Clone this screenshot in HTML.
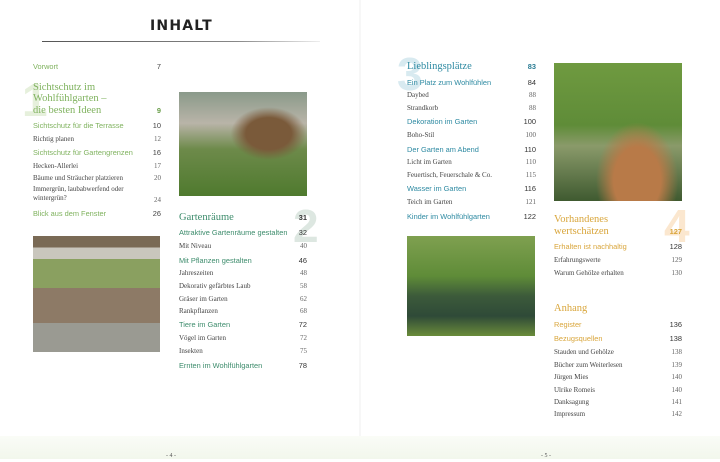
<!DOCTYPE html>
<html><head><meta charset="utf-8"><style>
*{margin:0;padding:0;box-sizing:border-box}
body{width:720px;height:459px;position:relative;overflow:hidden;background:#fff;font-family:"Liberation Serif",serif}
.bg{position:absolute;left:0;top:436px;width:720px;height:23px;background:linear-gradient(#fafcf7,#f2f7ec)}
.r{position:absolute;height:12px;line-height:12px;white-space:nowrap}
.r span{position:absolute;right:0;top:0}
.s{font-family:"Liberation Sans",sans-serif;font-size:7.4px}
.p{font-size:7px;color:#444}
.p span{color:#666}
.h{font-size:10.5px}
.n{position:absolute;font-family:"Liberation Sans",sans-serif;font-weight:bold;font-size:46px;line-height:46px}
.ph{position:absolute}
</style></head><body>
<div class="bg"></div>
<div style="position:absolute;left:359px;top:0;width:2px;height:436px;background:#f7f7f7"></div>
<div style="position:absolute;left:150px;top:18px;font-family:'DejaVu Sans',sans-serif;font-weight:bold;font-size:14px;letter-spacing:1.2px;color:#222">INHALT</div>
<div style="position:absolute;left:42px;top:41px;width:278px;height:1px;background:linear-gradient(90deg,#555,#888 70%,#eee)"></div>

<div class="n" style="left:22px;top:77px;color:#e6f0dc">1</div>
<div class="n" style="left:293px;top:203px;color:#dde7e1">2</div>
<div class="n" style="left:397px;top:51px;color:#d8eaf0">3</div>
<div class="n" style="left:664px;top:203px;color:#fbe7cf">4</div>

<div style="color:#7fb25e">
<div class="r s" style="left:33px;top:61px;width:128px">Vorwort<span style="color:#444">7</span></div>
<div class="r h" style="left:33px;top:82px;width:128px">Sichtschutz im</div>
<div class="r h" style="left:33px;top:93px;width:128px">Wohlfühlgarten –</div>
<div class="r h" style="left:33px;top:105px;width:128px">die besten Ideen<span class="s" style="font-weight:bold;color:#6a9e4a">9</span></div>
<div class="r s" style="left:33px;top:120px;width:128px">Sichtschutz für die Terrasse<span style="color:#444">10</span></div>
<div class="r p" style="left:33px;top:133px;width:128px">Richtig planen<span>12</span></div>
<div class="r s" style="left:33px;top:147px;width:128px">Sichtschutz für Gartengrenzen<span style="color:#444">16</span></div>
<div class="r p" style="left:33px;top:160px;width:128px">Hecken-Allerlei<span>17</span></div>
<div class="r p" style="left:33px;top:172px;width:128px">Bäume und Sträucher platzieren<span>20</span></div>
<div class="r p" style="left:33px;top:185px;width:128px;line-height:9px">Immergrün, laubabwerfend oder<br>wintergrün?</div>
<div class="r p" style="left:33px;top:194px;width:128px"><span>24</span></div>
<div class="r s" style="left:33px;top:208px;width:128px">Blick aus dem Fenster<span style="color:#444">26</span></div>
</div>

<div style="color:#3d8c6c">
<div class="r h" style="left:179px;top:212px;width:128px">Gartenräume<span class="s" style="font-weight:bold;color:#333">31</span></div>
<div class="r s" style="left:179px;top:227px;width:128px">Attraktive Gartenräume gestalten<span style="color:#333">32</span></div>
<div class="r p" style="left:179px;top:240px;width:128px">Mit Niveau<span>40</span></div>
<div class="r s" style="left:179px;top:255px;width:128px">Mit Pflanzen gestalten<span style="color:#333">46</span></div>
<div class="r p" style="left:179px;top:267px;width:128px">Jahreszeiten<span>48</span></div>
<div class="r p" style="left:179px;top:280px;width:128px">Dekorativ gefärbtes Laub<span>58</span></div>
<div class="r p" style="left:179px;top:293px;width:128px">Gräser im Garten<span>62</span></div>
<div class="r p" style="left:179px;top:305px;width:128px">Rankpflanzen<span>68</span></div>
<div class="r s" style="left:179px;top:319px;width:128px">Tiere im Garten<span style="color:#333">72</span></div>
<div class="r p" style="left:179px;top:332px;width:128px">Vögel im Garten<span>72</span></div>
<div class="r p" style="left:179px;top:345px;width:128px">Insekten<span>75</span></div>
<div class="r s" style="left:179px;top:360px;width:128px">Ernten im Wohlfühlgarten<span style="color:#333">78</span></div>
</div>

<div style="color:#2e8aa2">
<div class="r h" style="left:407px;top:61px;width:129px">Lieblingsplätze<span class="s" style="font-weight:bold;color:#2a7c94">83</span></div>
<div class="r s" style="left:407px;top:77px;width:129px">Ein Platz zum Wohlfühlen<span style="color:#333">84</span></div>
<div class="r p" style="left:407px;top:89px;width:129px">Daybed<span>88</span></div>
<div class="r p" style="left:407px;top:102px;width:129px">Strandkorb<span>88</span></div>
<div class="r s" style="left:407px;top:116px;width:129px">Dekoration im Garten<span style="color:#333">100</span></div>
<div class="r p" style="left:407px;top:129px;width:129px">Boho-Stil<span>100</span></div>
<div class="r s" style="left:407px;top:144px;width:129px">Der Garten am Abend<span style="color:#333">110</span></div>
<div class="r p" style="left:407px;top:156px;width:129px">Licht im Garten<span>110</span></div>
<div class="r p" style="left:407px;top:169px;width:129px">Feuertisch, Feuerschale &amp; Co.<span>115</span></div>
<div class="r s" style="left:407px;top:183px;width:129px">Wasser im Garten<span style="color:#333">116</span></div>
<div class="r p" style="left:407px;top:196px;width:129px">Teich im Garten<span>121</span></div>
<div class="r s" style="left:407px;top:211px;width:129px">Kinder im Wohlfühlgarten<span style="color:#333">122</span></div>
</div>

<div style="color:#d9a63c">
<div class="r h" style="left:554px;top:214px;width:128px">Vorhandenes</div>
<div class="r h" style="left:554px;top:226px;width:128px">wertschätzen<span class="s" style="font-weight:bold;color:#d9a63c">127</span></div>
<div class="r s" style="left:554px;top:241px;width:128px">Erhalten ist nachhaltig<span style="color:#333">128</span></div>
<div class="r p" style="left:554px;top:254px;width:128px">Erfahrungswerte<span>129</span></div>
<div class="r p" style="left:554px;top:267px;width:128px">Warum Gehölze erhalten<span>130</span></div>
<div class="r h" style="left:554px;top:303px;width:128px">Anhang</div>
<div class="r s" style="left:554px;top:319px;width:128px">Register<span style="color:#333">136</span></div>
<div class="r s" style="left:554px;top:333px;width:128px">Bezugsquellen<span style="color:#333">138</span></div>
<div class="r p" style="left:554px;top:346px;width:128px">Stauden und Gehölze<span>138</span></div>
<div class="r p" style="left:554px;top:359px;width:128px">Bücher zum Weiterlesen<span>139</span></div>
<div class="r p" style="left:554px;top:371px;width:128px">Jürgen Mies<span>140</span></div>
<div class="r p" style="left:554px;top:384px;width:128px">Ulrike Romeis<span>140</span></div>
<div class="r p" style="left:554px;top:396px;width:128px">Danksagung<span>141</span></div>
<div class="r p" style="left:554px;top:408px;width:128px">Impressum<span>142</span></div>
</div>

<div class="r p" style="left:166px;top:450px;font-size:6px;color:#555">- 4 -</div>
<div class="r p" style="left:541px;top:450px;font-size:6px;color:#555">- 5 -</div>

<div class="ph" style="left:179px;top:92px;width:128px;height:104px;background:radial-gradient(ellipse at 70% 40%,#7a5a3a 0 18%,transparent 30%),linear-gradient(180deg,#8a9a8a 0,#b9b4a8 30%,#6d8a4a 55%,#4f7a2e 100%)"></div>
<div class="ph" style="left:33px;top:236px;width:127px;height:116px;background:linear-gradient(180deg,#7a6a55 0 10%,#c9c6bd 10% 20%,#8aa060 20% 45%,#8d7a66 45% 75%,#9a9a92 75%)"></div>
<div class="ph" style="left:407px;top:236px;width:128px;height:100px;background:linear-gradient(180deg,#7fa050 0,#5f8c38 40%,#3c5a3a 60%,#2f4a38 80%,#6a8c3a 100%)"></div>
<div class="ph" style="left:554px;top:63px;width:128px;height:138px;background:radial-gradient(ellipse at 65% 85%,#b87a48 0 20%,transparent 35%),linear-gradient(180deg,#6f9a40 0,#5f8c38 45%,#8a9a6a 60%,#3f5a30 100%)"></div>
</body></html>
